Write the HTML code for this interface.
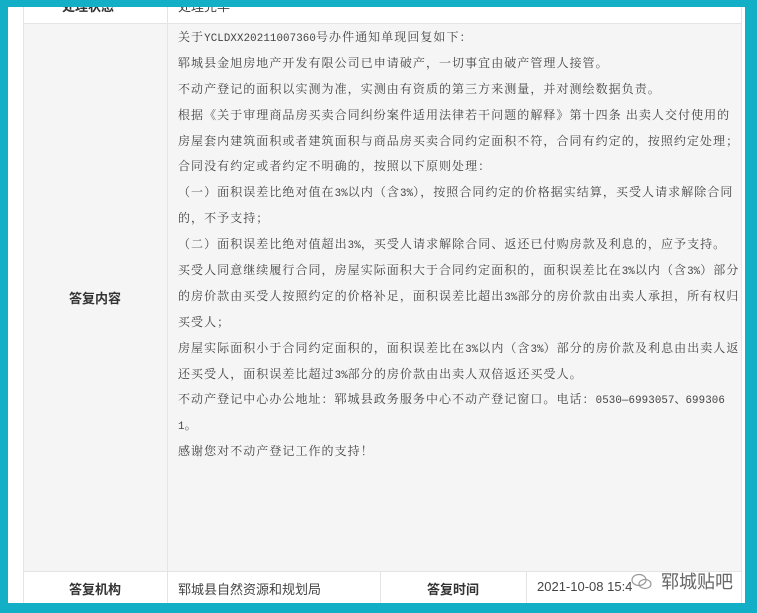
<!DOCTYPE html>
<html><head><meta charset="utf-8"><style>
html,body{margin:0;padding:0;}
body{width:757px;height:613px;background:#12afc6;position:relative;overflow:hidden;font-family:"Liberation Sans","Noto Sans CJK SC",sans-serif;}
.panel{position:absolute;left:8px;top:0;width:737px;height:603px;background:#fff;}
.cell{position:absolute;box-sizing:border-box;border-left:1px solid #e4e4e4;border-top:1px solid #e4e4e4;}
.lbl{font-weight:bold;font-size:13px;color:#333;text-align:center;}
.txt{position:absolute;left:178px;top:24px;font-size:12px;letter-spacing:1.05px;color:#444;white-space:nowrap;font-family:"Noto Serif CJK SC",serif;}
.txt div{height:25.9px;line-height:25.9px;overflow:visible;}
.txt i{font-style:normal;font-family:"Liberation Mono",monospace;font-size:10.8px;letter-spacing:0.1px;line-height:0;}
.mark{position:absolute;left:661px;top:568px;font-size:18px;color:#666;font-family:"Noto Sans CJK SC",sans-serif;text-shadow:0 0 2px #fff;}
</style></head><body>
<div class="panel"></div>
<div class="cell" style="left:23px;top:-10px;width:144px;height:33px;background:#fff;border-top:none"></div>
<div class="cell" style="left:167px;top:-10px;width:575px;height:33px;background:#fff;border-top:none;border-right:1px solid #e4e4e4"></div>
<div style="position:absolute;left:62px;top:-4px;font-size:13px;font-weight:bold;color:#333">处理状态</div>
<div style="position:absolute;left:178px;top:-4px;font-size:13px;color:#444">处理完毕</div>
<div class="cell" style="left:23px;top:23px;width:144px;height:548px;background:#f5f5f5"></div>
<div class="cell" style="left:167px;top:23px;width:575px;height:548px;background:#f5f5f5;border-right:1px solid #e4e4e4"></div>
<div class="lbl" style="position:absolute;left:23px;top:288px;width:144px">答复内容</div>
<div class="txt">
<div>关于<i>YCLDXX20211007360</i>号办件通知单现回复如下：</div>
<div>郓城县金旭房地产开发有限公司已申请破产，一切事宜由破产管理人接管。</div>
<div>不动产登记的面积以实测为准，实测由有资质的第三方来测量，并对测绘数据负责。</div>
<div>根据《关于审理商品房买卖合同纠纷案件适用法律若干问题的解释》第十四条 出卖人交付使用的</div>
<div>房屋套内建筑面积或者建筑面积与商品房买卖合同约定面积不符，合同有约定的，按照约定处理；</div>
<div>合同没有约定或者约定不明确的，按照以下原则处理：</div>
<div>（一）面积误差比绝对值在<i>3%</i>以内（含<i>3%</i>），按照合同约定的价格据实结算，买受人请求解除合同</div>
<div>的，不予支持；</div>
<div>（二）面积误差比绝对值超出<i>3%</i>，买受人请求解除合同、返还已付购房款及利息的，应予支持。</div>
<div>买受人同意继续履行合同，房屋实际面积大于合同约定面积的，面积误差比在<i>3%</i>以内（含<i>3%</i>）部分</div>
<div>的房价款由买受人按照约定的价格补足，面积误差比超出<i>3%</i>部分的房价款由出卖人承担，所有权归</div>
<div>买受人；</div>
<div>房屋实际面积小于合同约定面积的，面积误差比在<i>3%</i>以内（含<i>3%</i>）部分的房价款及利息由出卖人返</div>
<div>还买受人，面积误差比超过<i>3%</i>部分的房价款由出卖人双倍返还买受人。</div>
<div>不动产登记中心办公地址：郓城县政务服务中心不动产登记窗口。电话：<i>0530—6993057、699306</i></div>
<div><i>1</i>。</div>
<div>感谢您对不动产登记工作的支持！</div>
</div>
<div class="cell" style="left:23px;top:571px;width:144px;height:40px;background:#fff"></div>
<div class="cell" style="left:167px;top:571px;width:213px;height:40px;background:#fff"></div>
<div class="cell" style="left:380px;top:571px;width:146px;height:40px;background:#fff"></div>
<div class="cell" style="left:526px;top:571px;width:216px;height:40px;background:#fff;border-right:1px solid #e4e4e4"></div>
<div class="lbl" style="position:absolute;left:23px;top:579px;width:144px">答复机构</div>
<div style="position:absolute;left:178px;top:579px;font-size:13px;color:#444">郓城县自然资源和规划局</div>
<div class="lbl" style="position:absolute;left:380px;top:579px;width:146px">答复时间</div>
<div style="position:absolute;left:537px;top:579px;font-size:13px;color:#444">2021-10-08 15:4</div>
<svg style="position:absolute;left:630px;top:572px" width="24" height="20" viewBox="0 0 24 20"><g fill="none" stroke="#999" stroke-width="1.2"><ellipse cx="9" cy="8" rx="7" ry="5.5"/><ellipse cx="15" cy="12" rx="6" ry="4.5"/></g></svg>
<div class="mark">郓城贴吧</div>
<div style="position:absolute;left:0;top:0;width:757px;height:7px;background:#12afc6"></div>
<div style="position:absolute;left:0;top:603px;width:757px;height:10px;background:#12afc6"></div>
</body></html>
